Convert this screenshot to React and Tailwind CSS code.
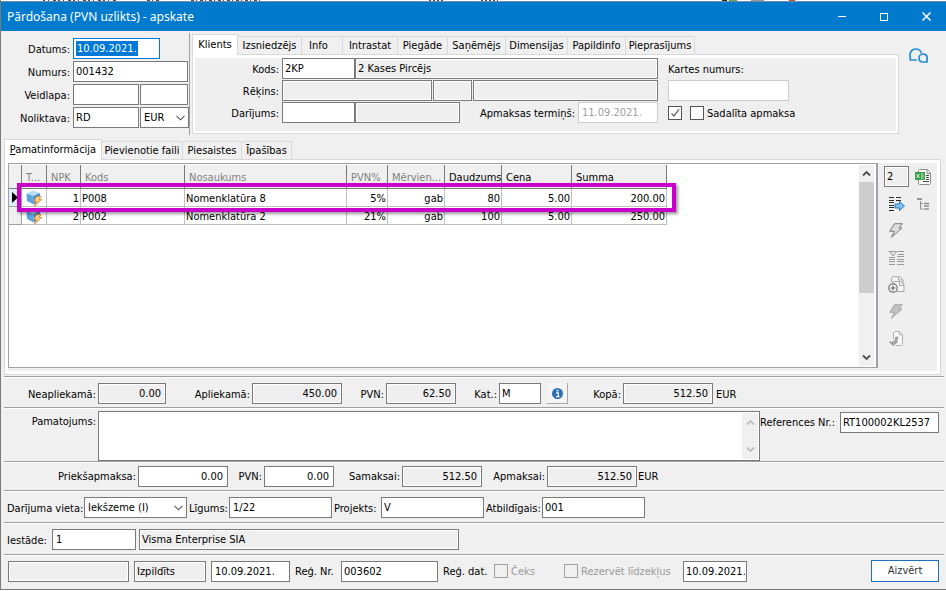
import React from 'react';
import clsx from 'clsx';

const CLIENT_TABS = [
  { label: 'Klients', width: 'w-[46px]' },
  { label: 'Izsniedzējs', width: 'w-[64px]' },
  { label: 'Info', width: 'w-[41px]', left: true },
  { label: 'Intrastat', width: 'w-[55px]' },
  { label: 'Piegāde', width: 'w-[50px]' },
  { label: 'Saņēmējs', width: 'w-[58px]' },
  { label: 'Dimensijas', width: 'w-[62px]' },
  { label: 'Papildinfo', width: 'w-[58px]' },
  { label: 'Pieprasījums', width: 'w-[69px]' },
];

const DETAIL_TABS = [
  { label: 'Pamatinformācija', width: 'w-[98px]', accessKey: true },
  { label: 'Pievienotie faili', width: 'w-[81px]' },
  { label: 'Piesaistes', width: 'w-[59px]' },
  { label: 'Īpašības', width: 'w-[50px]' },
];

const COLUMNS = [
  { label: 'T...', width: 'w-[25px]', dim: true },
  { label: 'NPK', width: 'w-[34px]', dim: true },
  { label: 'Kods', width: 'w-[104px]', dim: true },
  { label: 'Nosaukums', width: 'w-[162px]', dim: true },
  { label: 'PVN%', width: 'w-[41px]', dim: true },
  { label: 'Mērvien...', width: 'w-[57px]', dim: true },
  { label: 'Daudzums', width: 'w-[57px]' },
  { label: 'Cena', width: 'w-[70px]' },
  { label: 'Summa', width: 'w-[95px]' },
];

const ROWS = [
  { npk: 1, code: 'P008', name: 'Nomenklatūra 8', vat: '5%', unit: 'gab', qty: '80', price: '5.00', sum: '200.00' },
  { npk: 2, code: 'P002', name: 'Nomenklatūra 2', vat: '21%', unit: 'gab', qty: '100', price: '5.00', sum: '250.00' },
];

/* ---------- controls ---------- */

function TextBox({ className, readOnly, right, light, ...rest }) {
  return (
    <input
      type="text"
      readOnly={readOnly}
      className={clsx(
        'h-[21px] shrink-0 border px-1 outline-none rounded-none',
        light ? 'border-[#cccccc] text-[#a0a0a0]' : 'border-[#7a7a7a]',
        readOnly ? 'bg-[#efefef] shadow-[inset_0_0_0_1px_#ffffff]' : 'bg-white',
        right && 'text-right',
        className,
      )}
      {...rest}
    />
  );
}

function Label({ htmlFor, className, children }) {
  return (
    <label htmlFor={htmlFor} className={clsx('shrink-0 whitespace-nowrap pt-[2px]', className)}>
      {children}
    </label>
  );
}

function Select({ id, value, className, label }) {
  return (
    <div className={clsx('relative h-[21px] shrink-0', className)}>
      <select
        id={id}
        aria-label={label}
        defaultValue={value}
        className="h-full w-full appearance-none border border-[#7a7a7a] bg-white pl-[3px] outline-none"
      >
        <option>{value}</option>
      </select>
      <svg className="pointer-events-none absolute right-1 top-2 h-[6px] w-[9px]" viewBox="0 0 9 6">
        <path d="M0.5 0.8 4.5 4.8 8.5 0.8" fill="none" stroke="#555555" strokeWidth="1.1" />
      </svg>
    </div>
  );
}

function CheckBox({ id, label, checked, disabled, className }) {
  return (
    <div className={clsx('flex shrink-0 items-center gap-[3px]', className)}>
      <span className="relative flex">
        <input
          id={id}
          type="checkbox"
          aria-label={label || 'Termiņš'}
          defaultChecked={checked}
          disabled={disabled}
          className={clsx(
            'size-[14px] appearance-none border',
            disabled ? 'border-[#a0a0a0] bg-[#f0f0f0]' : 'border-[#555555] bg-white',
          )}
        />
        {checked && (
          <svg className="pointer-events-none absolute left-[2px] top-[2px] size-[10px]" viewBox="0 0 10 10">
            <path d="M1.5 5.5 4 8 9 1.2" fill="none" stroke="#666666" strokeWidth="1.3" />
          </svg>
        )}
      </span>
      {label && (
        <label htmlFor={id} className={clsx('whitespace-nowrap pt-[2px]', disabled && 'text-[#9a9a9a]')}>
          {label}
        </label>
      )}
    </div>
  );
}

function TabStrip({ tabs }) {
  return (
    <div role="tablist" className="flex items-end">
      {tabs.map((tab, i) => (
        <button
          key={tab.label}
          type="button"
          role="tab"
          aria-selected={i === 0}
          className={clsx(
            'whitespace-nowrap border-r border-t border-[#d9d9d9] leading-[17px]',
            tab.width,
            tab.left && 'pl-[7px] text-left',
            i === 0 ? 'relative z-10 -mb-px h-[21px] border-l bg-white pb-[2px]' : 'h-[18px] bg-[#f0f0f0]',
          )}
        >
          {tab.accessKey ? (
            <>
              <span className="underline">{tab.label[0]}</span>
              {tab.label.slice(1)}
            </>
          ) : (
            tab.label
          )}
        </button>
      ))}
    </div>
  );
}

function Row({ className, children }) {
  return (
    <div className={clsx('flex border-t border-[#a0a0a0] shadow-[inset_0_1px_0_#ffffff]', className)}>
      {children}
    </div>
  );
}

/* ---------- icons ---------- */

function ChatIcon() {
  return (
    <svg className="h-[15px] w-[19px]" viewBox="0 0 19 15" fill="none" stroke="#1e8fd5" strokeWidth="1.7">
      <path d="M8 12H1.300V9.700C0.300 6.500 1.500 1 6.600 1c3.400 0 5.200 2 5.600 4" />
      <path d="M18 14v-2.200c.2-.6.2-1.200.2-1.800 0-2.300-1.700-4-4-4s-4.200 1.700-4.200 4 1.700 4 4 4z" />
    </svg>
  );
}

function CubeIcon() {
  return (
    <svg className="mx-auto block size-[16px]" viewBox="0 0 16 16">
      <path d="M7 0.500 14 3 7.500 6 0.500 3.500z" fill="#b9dcf6" />
      <path d="M0.500 3.500 7.500 6V14.500L1 11z" fill="#5ea5de" />
      <path d="M14 3 7.500 6V14.500L13.500 11z" fill="#3f87c8" />
      <path d="M10.500 6.500h4.500l-2 3h2.800L8.500 16l1.800-4.500H8z" fill="#fdd08a" stroke="#d5862c" strokeWidth="0.800" />
    </svg>
  );
}

function ExcelIcon() {
  return (
    <svg className="size-[16px]" viewBox="0 0 16 16">
      <path d="M3.500 1.500 4.500.500h8l3 3.500v10.500l-1 1h-10l-1-1z" fill="#ffffff" stroke="#8a8a8a" />
      <path d="M12 .8v3.700h3" fill="none" stroke="#8a8a8a" />
      <path d="M11 6.500h3M11 8.500h3M11 10.500h3M8 12.500h6" stroke="#444444" />
      <rect x="0" y="3" width="10" height="8" fill="#3c9f47" />
      <path d="M1.500 5 4.500 9M4.500 5 1.500 9M6 5h2.500M6 7h2.500M6 9h2.500" stroke="#d5f0d8" strokeWidth="1" />
    </svg>
  );
}

function ExportListIcon() {
  return (
    <svg className="h-[14px] w-[17px]" viewBox="0 0 17 14">
      <path
        d="M1 .500h5M1 3.500h5M1 5.500h5M1 8.500h5M1 10.500h5M1 13.500h5M8 .500h5M8 3.500h5"
        stroke="#2a2a2a"
      />
      <path d="M7 7h4.500V4.500l5 4.500-5 4.500v-2.500H7z" fill="#7dc0f2" stroke="#1d6fb8" strokeWidth="0.900" />
    </svg>
  );
}

function TreeIcon() {
  return (
    <svg className="h-[12px] w-[13px]" viewBox="0 0 13 12" fill="none" stroke="#909090">
      <path d="M0 1h5" strokeWidth="2" />
      <path d="M3.500 3v8h2.500M3.500 5.500h2.500" />
      <path d="M7 5.500h5M7 8h5M7 11h5" strokeWidth="1.500" />
    </svg>
  );
}

function BoltIcon({ faded }) {
  return (
    <svg className="h-[15px] w-[14px]" viewBox="0 0 14 15">
      <path
        d="M5.500 .700h7.800L10 5h3L2.500 14.300 5.300 8.300H.8z"
        fill={faded ? '#c0c0c0' : '#dcdcdc'}
        stroke={faded ? '#a0a0a0' : '#707070'}
        strokeWidth="0.900"
      />
    </svg>
  );
}

function FilterListIcon() {
  return (
    <svg className="h-[14px] w-[16px]" viewBox="0 0 16 14" fill="none" stroke="#9a9a9a">
      <path d="M1 .500h8L5 5z" fill="#e8e8e8" />
      <path d="M10 .500h6M10 3.500h6M9 5.500h7M9 8.500h7M9 10.500h7M9 13.500h7M1 6.500h6M1 8.500h6M1 10.500h6M1 13.500h6" />
    </svg>
  );
}

function AddPagesIcon() {
  return (
    <svg className="h-[17px] w-[17px]" viewBox="0 0 17 17" stroke="#a8a8a8">
      <path d="M3.500 6V2L5 .7h7L15 4v4.500" fill="#f5f5f5" />
      <path d="M4.500 8.500 5 5.500h7.500L16 9v6.500H6z" fill="#f5f5f5" />
      <path d="M10.500 1v3H15M11.500 6v3.500H16" fill="none" />
      <circle cx="5" cy="12" r="4.200" fill="#ffffff" stroke="#858585" strokeWidth="1.400" />
      <path d="M5 9.500v5M2.500 12h5" stroke="#858585" strokeWidth="1.600" />
    </svg>
  );
}

function PageBackIcon() {
  return (
    <svg className="h-[15px] w-[14px]" viewBox="0 0 14 15">
      <path d="M4.500 8V1.500l1-1h5.200l2.800 3v10l-1 1H7" fill="#f7f7f7" stroke="#b0b0b0" />
      <path d="M10.500 .8v3h3" fill="none" stroke="#b0b0b0" />
      <path d="M8.800 6c0 2.500-.5 4-1.800 5h1.500L4.300 14.700.3 11h2.400c2.300 0 4-2 4-5z" fill="#a8a8a8" stroke="#8a8a8a" strokeWidth="0.600" />
    </svg>
  );
}

function Chevron({ up, color = '#505050' }) {
  return (
    <svg className="h-[7px] w-[9px]" viewBox="0 0 9 7">
      <path d={up ? 'M1 5.500 4.500 2 8 5.500' : 'M1 1.500 4.500 5 8 1.500'} fill="none" stroke={color} strokeWidth="1.800" />
    </svg>
  );
}

/* ---------- sections ---------- */

function TitleBar() {
  return (
    <header>
      {/* sliver of the window behind */}
      <svg className="block h-px w-full bg-white" aria-hidden="true">
        <path d="M42 .5h75" stroke="#4a4a6a" strokeDasharray="2 3 1 4 3 2" />
        <path d="M146 .5h14M190 .5h70" stroke="#4a4a6a" strokeDasharray="3 2 1 3" />
        <path d="M428 .5h16M480 .5h17" stroke="#4a4a6a" strokeDasharray="2 2" />
        <path d="M721 .5h5" stroke="#222222" />
        <path d="M728 .5h8" stroke="#5ba558" />
        <path d="M750 .5h13" stroke="#999999" />
        <path d="M788 .5h6" stroke="#b0562a" />
      </svg>
      <div className="flex h-[30px] items-center border-t border-[#6f8ba3] bg-[#007acc] text-white">
        <h1 className="flex-1 pl-[6px] font-['Noto_Sans',sans-serif] text-[12px] leading-4">
          Pārdošana (PVN uzlikts) - apskate
        </h1>
        <div className="flex gap-[2px]">
          <button type="button" aria-label="Minimizēt" className="flex h-7 w-10 items-center justify-center">
            <span className="h-px w-2 bg-white" />
          </button>
          <button type="button" aria-label="Maksimizēt" className="flex h-7 w-10 items-center justify-center">
            <span className="size-2 border border-white" />
          </button>
          <button type="button" aria-label="Aizvērt logu" className="flex h-7 w-10 items-center justify-center">
            <svg className="size-[9px]" viewBox="0 0 9 9" stroke="#ffffff" strokeWidth="1.500">
              <path d="M.5.5l8 8M8.500.5l-8 8" />
            </svg>
          </button>
        </div>
      </div>
    </header>
  );
}

function DocumentFields() {
  return (
    <div className="grid shrink-0 grid-cols-[69px_auto] content-start items-center gap-x-[3px] gap-y-[2px] pt-[7px]">
      <Label htmlFor="date" className="text-right">Datums:</Label>
      <div className="flex h-[21px] w-[87px] items-center border border-[#0078d7] bg-white px-[2px]">
        <input id="date" type="text" defaultValue="10.09.2021." className="h-[15px] w-[62px] bg-[#0078d7] pl-px text-white outline-none" />
      </div>
      <Label htmlFor="number" className="text-right">Numurs:</Label>
      <TextBox id="number" defaultValue="001432" className="w-[115px] pl-[2px]" />
      <Label htmlFor="form" className="text-right">Veidlapa:</Label>
      <div className="flex gap-[1px]">
        <TextBox id="form" className="w-[66px]" />
        <TextBox aria-label="Veidlapas numurs" className="w-[48px]" />
      </div>
      <Label htmlFor="stock" className="text-right">Noliktava:</Label>
      <div className="flex gap-[1px]">
        <TextBox id="stock" defaultValue="RD" className="w-[66px] pl-[2px]" />
        <Select label="Valūta" value="EUR" className="w-[49px]" />
      </div>
    </div>
  );
}

function ClientPanel() {
  return (
    <div className="w-[707px] pt-[3px]">
      <TabStrip tabs={CLIENT_TABS} />
      <div className="border border-[#d9d9d9] bg-white p-[2px] pt-[3px]">
        <div className="flex bg-[#efefef] pb-2">
          <div className="flex flex-col gap-px">
            <div className="flex items-center">
              <Label htmlFor="client" className="w-[87px] pr-[3px] text-right">Kods:</Label>
              <TextBox id="client" defaultValue="2KP" className="w-[73px] pl-[2px]" />
              <TextBox aria-label="Klienta nosaukums" readOnly defaultValue="2 Kases Pircējs" className="w-[303px] pl-[2px]" />
            </div>
            <div className="flex items-center">
              <Label htmlFor="invoice" className="w-[87px] pr-[3px] text-right">Rēķins:</Label>
              <div className="flex gap-px">
                <TextBox id="invoice" readOnly className="w-[150px]" />
                <TextBox aria-label="Rēķina valūta" readOnly className="w-[39px]" />
                <TextBox aria-label="Rēķina banka" readOnly className="w-[185px]" />
              </div>
            </div>
            <div className="flex items-center">
              <Label htmlFor="deal" className="w-[87px] pr-[3px] text-right">Darījums:</Label>
              <TextBox id="deal" className="w-[73px]" />
              <TextBox aria-label="Darījuma nosaukums" readOnly className="w-[105px]" />
              <Label htmlFor="due" className="w-[118px] pr-[3px] text-right">Apmaksas termiņš:</Label>
              <TextBox id="due" light defaultValue="11.09.2021." className="w-[80px] pl-[3px]" />
            </div>
          </div>
          <div className="ml-[10px] flex flex-col gap-px">
            <div className="flex h-[21px] items-center">
              <Label htmlFor="card">Kartes numurs:</Label>
            </div>
            <TextBox id="card" light className="w-[121px]" />
            <div className="flex h-[21px] items-center gap-2">
              <CheckBox id="due-on" checked />
              <CheckBox id="split" label="Sadalīta apmaksa" />
            </div>
          </div>
        </div>
      </div>
    </div>
  );
}

function ItemsTable() {
  const cell = 'border-b border-r border-[#c0c0c0] px-px pb-0 pt-[2px]';
  const num = clsx(cell, 'text-right');
  return (
    <table className="w-[658px] table-fixed border-separate border-spacing-0">
      <thead>
        <tr className="h-[24px] bg-[#f0f0f0]">
          <th aria-label="Rinda" className="w-[13px] border-b border-r border-[#7a7a7a] p-0" />
          {COLUMNS.map((col) => (
            <th
              key={col.label}
              className={clsx(
                'whitespace-nowrap border-b border-r border-[#7a7a7a] pb-0 pl-1 pr-0 pt-[2px] text-left font-normal',
                col.width,
                col.dim && 'text-[#808080]',
              )}
            >
              {col.label}
            </th>
          ))}
        </tr>
      </thead>
      <tbody>
        {ROWS.map((row, i) => (
          <tr key={row.npk} className="h-[18px] bg-white">
            <td className={clsx('border-b border-r border-[#a0a0a0] p-0', i === 0 ? 'bg-[#dff0fb]' : 'bg-[#f0f0f0]')}>
              {i === 0 && (
                <svg className="ml-[3px] block h-[11px] w-[6px]" viewBox="0 0 6 11">
                  <path d="M0 0 6 5.500 0 11z" fill="#000000" />
                </svg>
              )}
            </td>
            <td className="border-b border-r border-[#c0c0c0] p-0"><CubeIcon /></td>
            <td className={num}>{row.npk}</td>
            <td className={cell}>{row.code}</td>
            <td className={cell}>{row.name}</td>
            <td className={num}>{row.vat}</td>
            <td className={num}>{row.unit}</td>
            <td className={num}>{row.qty}</td>
            <td className={num}>{row.price}</td>
            <td className={num}>{row.sum}</td>
          </tr>
        ))}
      </tbody>
    </table>
  );
}

function ToolButton({ label, children }) {
  return (
    <button type="button" aria-label={label} className="flex h-[27px] w-[24px] items-center justify-center">
      {children}
    </button>
  );
}

function ItemsPanel() {
  return (
    <section className="flex flex-1 flex-col pl-[3px] pr-[5px]">
      <TabStrip tabs={DETAIL_TABS} />
      <div className="flex flex-1 border border-[#d9d9d9] bg-white p-[3px]">
        <div className="flex flex-1 bg-[#efefef] pb-[3px]">
          <div className="relative flex flex-1 border border-r-2 border-[#a0a0a8] bg-white pr-[2px] pt-px pb-px">
            <div className="flex-1">
              <ItemsTable />
            </div>
            <div className="flex w-[15px] flex-col items-center bg-[#f0f0f0] py-[5px]">
              <Chevron up />
              <div className="mb-auto mt-[5px] h-[111px] w-full bg-[#cdcdcd]" />
              <Chevron />
            </div>
            <div className="pointer-events-none absolute left-2 top-[19px] h-[29px] w-[659px] border-4 border-[#c800c8] shadow-[2px_2px_3px_rgba(0,0,0,0.4)]" />
          </div>
          <div className="grid w-[59px] shrink-0 grid-cols-[25px_25px] content-start gap-x-[2px] pl-[6px]">
            <div className="flex h-[27px] items-center">
              <TextBox aria-label="Rindu skaits" readOnly defaultValue="2" className="w-[25px] pl-[2px]" />
            </div>
            <ToolButton label="Eksportēt uz Excel"><ExcelIcon /></ToolButton>
            <ToolButton label="Kopēt rindas"><ExportListIcon /></ToolButton>
            <ToolButton label="Koks"><TreeIcon /></ToolButton>
            <div className="flex flex-col">
              <ToolButton label="Izpildīt"><BoltIcon /></ToolButton>
              <ToolButton label="Filtrēt"><FilterListIcon /></ToolButton>
              <ToolButton label="Pievienot"><AddPagesIcon /></ToolButton>
              <ToolButton label="Ātrā darbība"><BoltIcon faded /></ToolButton>
              <ToolButton label="Atgriezt"><PageBackIcon /></ToolButton>
            </div>
          </div>
        </div>
      </div>
    </section>
  );
}

function Footer() {
  return (
    <section className="mt-px pl-[3px] pr-[2px]">
      <Row className="h-[31px] items-center pt-[3px]">
        <Label htmlFor="untaxed" className="w-[94px] pr-[2px] text-right">Neapliekamā:</Label>
        <TextBox id="untaxed" readOnly right defaultValue="0.00" className="w-[68px]" />
        <Label htmlFor="taxed" className="w-[86px] pr-[2px] text-right">Apliekamā:</Label>
        <TextBox id="taxed" readOnly right defaultValue="450.00" className="w-[90px]" />
        <Label htmlFor="vat" className="w-[44px] pr-[2px] text-right">PVN:</Label>
        <TextBox id="vat" readOnly right defaultValue="62.50" className="w-[70px]" />
        <Label htmlFor="cat" className="w-[43px] pr-[2px] text-right">Kat.:</Label>
        <TextBox id="cat" defaultValue="M" className="w-[42px] pl-[2px]" />
        <button
          type="button"
          aria-label="Informācija"
          className="ml-[6px] flex size-[21px] shrink-0 items-center justify-center border-b border-r border-[#a8a8a8] bg-[#f4f4f4]"
        >
          <svg className="size-[11px]" viewBox="0 0 11 11">
            <circle cx="5.500" cy="5.500" r="5.500" fill="#2f6fb5" />
            <path d="M4 4.800h2.300V8.500M4 8.700h3.500" stroke="#ffffff" strokeWidth="1.200" fill="none" />
            <rect x="4.700" y="1.800" width="1.700" height="1.600" fill="#ffffff" />
          </svg>
        </button>
        <Label htmlFor="total" className="w-[55px] pr-[2px] text-right">Kopā:</Label>
        <TextBox id="total" readOnly right defaultValue="512.50" className="w-[90px]" />
        <span className="pl-[3px] pt-[2px]">EUR</span>
      </Row>

      <Row className="h-[54px] pt-[3px]">
        <Label htmlFor="reason" className="mt-[2px] w-[94px] pr-[2px] text-right">Pamatojums:</Label>
        <div className="flex h-[50px] flex-1 border border-[#7a7a7a] bg-white p-px">
          <textarea id="reason" className="flex-1 resize-none outline-none" />
          <div className="flex w-4 flex-col items-center justify-between bg-[#f0f0f0] py-[6px]">
            <Chevron up color="#bdbdbd" />
            <Chevron color="#bdbdbd" />
          </div>
        </div>
        <Label htmlFor="ref" className="mt-[3px] w-[80px]">References Nr.:</Label>
        <TextBox id="ref" defaultValue="RT100002KL2537" className="mr-[5px] mt-px w-[99px] px-[2px]" />
      </Row>

      <Row className="h-[29px] items-center">
        <Label htmlFor="prepay" className="w-[134px] pr-[2px] text-right">Priekšapmaksa:</Label>
        <TextBox id="prepay" right defaultValue="0.00" className="w-[90px]" />
        <Label htmlFor="prepay-vat" className="w-[36px] pr-[2px] text-right">PVN:</Label>
        <TextBox id="prepay-vat" right defaultValue="0.00" className="w-[70px]" />
        <Label htmlFor="to-pay" className="w-[68px] pr-[2px] text-right">Samaksai:</Label>
        <TextBox id="to-pay" readOnly right defaultValue="512.50" className="w-[80px]" />
        <Label htmlFor="payable" className="w-[65px] pr-[2px] text-right">Apmaksai:</Label>
        <TextBox id="payable" readOnly right defaultValue="512.50" className="w-[90px]" />
        <span className="pl-px pt-[2px]">EUR</span>
      </Row>

      <Row className="h-[32px] items-center pl-[3px] pt-[2px]">
        <Label htmlFor="place" className="w-[77px]">Darījuma vieta:</Label>
        <Select id="place" value="Iekšzeme (I)" className="w-[103px]" />
        <Label htmlFor="contract" className="w-[42px] pl-[2px]">Līgums:</Label>
        <TextBox id="contract" defaultValue="1/22" className="w-[103px] pl-[3px]" />
        <Label htmlFor="project" className="w-[49px] pl-[2px]">Projekts:</Label>
        <TextBox id="project" defaultValue="V" className="w-[103px] pl-[2px]" />
        <Label htmlFor="owner" className="w-[58px] pl-[2px]">Atbildīgais:</Label>
        <TextBox id="owner" defaultValue="001" className="w-[103px] pl-[2px]" />
      </Row>

      <Row className="h-[32px] items-center pl-[3px] pt-[2px]">
        <Label htmlFor="org" className="w-[45px]">Iestāde:</Label>
        <TextBox id="org" defaultValue="1" className="w-[84px] pl-[3px]" />
        <TextBox aria-label="Iestādes nosaukums" readOnly defaultValue="Visma Enterprise SIA" className="ml-[3px] w-[320px] pl-[2px]" />
      </Row>

      <Row className="h-[35px] items-center pb-[2px] pl-1">
        <TextBox aria-label="Statuss" readOnly className="w-[121px]" />
        <TextBox aria-label="Stāvoklis" readOnly defaultValue="Izpildīts" className="ml-[5px] w-[72px] pl-[2px]" />
        <TextBox aria-label="Izpildes datums" defaultValue="10.09.2021." className="ml-[5px] w-[79px] pl-[3px]" />
        <Label htmlFor="reg-no" className="w-[51px] pl-[5px]">Reģ. Nr.</Label>
        <TextBox id="reg-no" defaultValue="003602" className="w-[97px] pl-[2px]" />
        <Label htmlFor="reg-date" className="w-[56px] pl-[5px]">Reģ. dat.</Label>
        <CheckBox id="receipt" label="Čeks" disabled className="w-[70px]" />
        <CheckBox id="reserve" label="Rezervēt līdzekļus" disabled className="w-[119px]" />
        <TextBox id="reg-date" defaultValue="10.09.2021." className="w-[64px] pl-[2px] pr-0" />
        <button
          type="button"
          className="ml-auto mr-[5px] h-[22px] w-[68px] border border-[#1e6fc0] bg-white text-[#333333]"
        >
          Aizvērt
        </button>
      </Row>
    </section>
  );
}

export default function App() {
  return (
    <main className="flex min-h-[calc(100vh-1px)] w-full flex-col border-b border-l border-[#7a7a7a] bg-[#f0f0f0] font-['DejaVu_Sans_Condensed','Noto_Sans',sans-serif] text-[11px] leading-[14px] text-black">
      <TitleBar />
      <section className="flex h-[108px]">
        <DocumentFields />
        <div className="mr-[2px] mt-[2px] h-[102px] w-px bg-[#a0a0a0]" />
        <ClientPanel />
        <button type="button" aria-label="Sarakste" className="ml-[8px] mt-[13px] flex size-[22px] items-center justify-center">
          <ChatIcon />
        </button>
      </section>
      <ItemsPanel />
      <Footer />
    </main>
  );
}
